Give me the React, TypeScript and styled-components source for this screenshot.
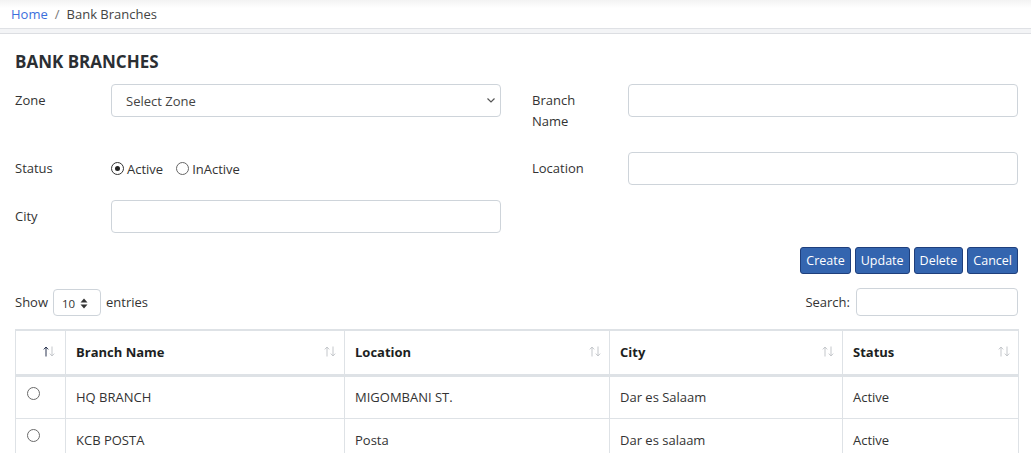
import React from "react";
import styled, { createGlobalStyle } from "styled-components";

const Global = createGlobalStyle`
  html, body { margin: 0; padding: 0; background: #fff; }
  body { font-family: "Open Sans", "Liberation Sans", sans-serif; font-size: 13px; color: #333; }
  * { box-sizing: border-box; }
`;

const Page = styled.div`
  width: 1031px;
  height: 453px;
  overflow: hidden;
  background: #f3f4f6;
`;

const Breadcrumb = styled.nav`
  height: 29px;
  display: flex;
  align-items: center;
  gap: 7px;
  padding: 0 11px;
  background: linear-gradient(#f3f3f3 0px, #ffffff 8px);
  border-bottom: 1px solid #dfe1e5;
  font-size: 13px;
`;

const Crumb = styled.span<{ $link?: boolean }>`
  color: ${(p) => (p.$link ? "#3b6fdc" : "#444")};
`;

const Sep = styled.span`
  color: #777;
`;

const Content = styled.main`
  margin-top: 4px;
  background: #fff;
  height: 420px;
  border-top: 1px solid #dcdee2;
  padding: 17px 13px 0 15px;
`;

const Heading = styled.h1`
  margin: 0 0 11px;
  font-size: 17px;
  line-height: 22px;
  font-weight: 700;
  color: #2b2f33;
`;

const FormGrid = styled.div`
  display: grid;
  grid-template-columns: 486px 486px;
  column-gap: 31px;
  row-gap: 16px;
  grid-template-rows: 52px 32px 32px;
`;

const Field = styled.div`
  display: grid;
  grid-template-columns: 96px 390px;
  align-items: start;
`;

const Label = styled.label`
  padding-top: 6px;
  line-height: 21px;
  font-size: 13px;
  color: #333;
`;

const TextInput = styled.input`
  width: 390px;
  height: 33px;
  border: 1px solid #ced4da;
  border-radius: 4px;
  background: #fff;
  font: inherit;
  padding: 0 12px;
  outline: none;
`;

const SelectWrap = styled.div`
  position: relative;
  width: 390px;
  height: 33px;
`;

const Select = styled.select`
  appearance: none;
  -webkit-appearance: none;
  width: 100%;
  height: 100%;
  border: 1px solid #ced4da;
  border-radius: 4px;
  background: #fff;
  font: inherit;
  font-size: 13px;
  color: #444;
  padding: 0 14px;
  outline: none;
`;

const Chevron = styled.svg`
  position: absolute;
  right: 5px;
  top: 12px;
  pointer-events: none;
`;

const RadioGroup = styled.div`
  display: flex;
  align-items: center;
  height: 33px;
  gap: 13px;
`;

const RadioLabel = styled.label`
  display: flex;
  align-items: center;
  gap: 3px;
  font-size: 13px;
  color: #333;
`;

const Radio = styled.span<{ $checked?: boolean }>`
  width: 13px;
  height: 13px;
  border-radius: 50%;
  border: 1px solid ${(p) => (p.$checked ? "#333" : "#666")};
  display: inline-flex;
  align-items: center;
  justify-content: center;
  &::after {
    content: "";
    width: 5px;
    height: 5px;
    border-radius: 50%;
    background: ${(p) => (p.$checked ? "#222" : "transparent")};
  }
`;

const ButtonBar = styled.div`
  display: flex;
  justify-content: flex-end;
  gap: 4px;
  margin-top: 15px;
`;

const Button = styled.button`
  height: 27px;
  padding: 0 5px;
  border: 1px solid #1f3f7c;
  border-radius: 3px;
  background: #3465af;
  color: #fff;
  font: inherit;
  font-size: 12.5px;
  cursor: pointer;
`;

const Toolbar = styled.div`
  display: flex;
  justify-content: space-between;
  align-items: center;
  margin-top: 14px;
  height: 28px;
`;

const ShowEntries = styled.div`
  display: flex;
  align-items: center;
  gap: 5px;
  font-size: 13px;
  color: #333;
`;

const SmallSelect = styled.div`
  width: 48px;
  height: 27px;
  border: 1px solid #ced4da;
  border-radius: 4px;
  display: flex;
  align-items: center;
  padding: 3px 0 0 8px;
  gap: 5px;
  font-size: 11.5px;
  color: #333;
`;

const SearchBox = styled.div`
  display: flex;
  align-items: center;
  gap: 6px;
  font-size: 13px;
  color: #333;
`;

const SearchInput = styled.input`
  width: 162px;
  height: 28px;
  border: 1px solid #ced4da;
  border-radius: 4px;
  outline: none;
`;

const Table = styled.table`
  margin-top: 13px;
  width: 1003px;
  border-collapse: collapse;
  font-size: 13px;
  table-layout: fixed;
`;

const Th = styled.th<{ $w: number }>`
  width: ${(p) => p.$w}px;
  height: 45px;
  position: relative;
  text-align: left;
  font-weight: 700;
  color: #1d1f22;
  padding: 0 10px;
  border: 1px solid #dee2e6;
  border-top: 2px solid #dee2e6;
  border-bottom: 3px solid #dee2e6;
`;

const SortIcon = styled.svg<{ $right: number }>`
  position: absolute;
  right: ${(p) => p.$right}px;
  top: 15px;
`;

const Td = styled.td`
  height: 43px;
  padding: 0 10px;
  border: 1px solid #dee2e6;
  color: #333;
  vertical-align: middle;
`;

const RadioTd = styled.td`
  height: 43px;
  padding: 10px 0 0 11px;
  border: 1px solid #dee2e6;
  vertical-align: top;
  line-height: 0;
`;

const RowRadio = styled.span`
  display: block;
  width: 13px;
  height: 13px;
  border-radius: 50%;
  border: 1px solid #6a6a6a;
`;

const rows = [
  { name: "HQ BRANCH", location: "MIGOMBANI ST.", city: "Dar es Salaam", status: "Active" },
  { name: "KCB POSTA", location: "Posta", city: "Dar es salaam", status: "Active" },
];

const cols = [
  { label: "", w: 50, right: 10 },
  { label: "Branch Name", w: 279, right: 8 },
  { label: "Location", w: 265, right: 8 },
  { label: "City", w: 233, right: 8 },
  { label: "Status", w: 176, right: 8 },
];

function SortArrows({ active, right }: { active?: boolean; right: number }) {
  const up = active ? "#2a3550" : "#c4c7cb";
  const down = "#c4c7cb";
  return (
    <SortIcon $right={right} width="12" height="11" viewBox="0 0 12 11">
      <path d="M3 10.5 V1 M0.8 3.4 L3 1 L5.2 3.4" fill="none" stroke={up} strokeWidth="1" />
      <path d="M9 0.5 V10 M6.8 7.6 L9 10 L11.2 7.6" fill="none" stroke={down} strokeWidth="1" />
    </SortIcon>
  );
}

export default function App() {
  return (
    <Page>
      <Global />
      <Breadcrumb>
        <Crumb $link>Home</Crumb>
        <Sep>/</Sep>
        <Crumb>Bank Branches</Crumb>
      </Breadcrumb>
      <Content>
        <Heading>BANK BRANCHES</Heading>
        <FormGrid>
          <Field>
            <Label>Zone</Label>
            <SelectWrap>
              <Select defaultValue="">
                <option value="">Select Zone</option>
              </Select>
              <Chevron width="10" height="8" viewBox="0 0 10 8">
                <path d="M1.5 2.5 L5 6 L8.5 2.5" fill="none" stroke="#555" strokeWidth="1.2" />
              </Chevron>
            </SelectWrap>
          </Field>
          <Field>
            <Label>
              Branch
              <br />
              Name
            </Label>
            <TextInput />
          </Field>
          <Field>
            <Label>Status</Label>
            <RadioGroup>
              <RadioLabel>
                <Radio $checked />
                Active
              </RadioLabel>
              <RadioLabel>
                <Radio />
                InActive
              </RadioLabel>
            </RadioGroup>
          </Field>
          <Field>
            <Label>Location</Label>
            <TextInput />
          </Field>
          <Field>
            <Label>City</Label>
            <TextInput />
          </Field>
        </FormGrid>
        <ButtonBar>
          <Button>Create</Button>
          <Button>Update</Button>
          <Button>Delete</Button>
          <Button>Cancel</Button>
        </ButtonBar>
        <Toolbar>
          <ShowEntries>
            Show
            <SmallSelect>
              10
              <svg width="8" height="11" viewBox="0 0 8 11">
                <path d="M0.5 4.5 L4 0.5 L7.5 4.5 Z M0.5 6.5 L4 10.5 L7.5 6.5 Z" fill="#333" />
              </svg>
            </SmallSelect>
            entries
          </ShowEntries>
          <SearchBox>
            Search:
            <SearchInput />
          </SearchBox>
        </Toolbar>
        <Table>
          <thead>
            <tr>
              {cols.map((c, i) => (
                <Th key={i} $w={c.w}>
                  {c.label}
                  <SortArrows active={i === 0} right={c.right} />
                </Th>
              ))}
            </tr>
          </thead>
          <tbody>
            {rows.map((r) => (
              <tr key={r.name}>
                <RadioTd>
                  <RowRadio />
                </RadioTd>
                <Td>{r.name}</Td>
                <Td>{r.location}</Td>
                <Td>{r.city}</Td>
                <Td>{r.status}</Td>
              </tr>
            ))}
          </tbody>
        </Table>
      </Content>
    </Page>
  );
}
